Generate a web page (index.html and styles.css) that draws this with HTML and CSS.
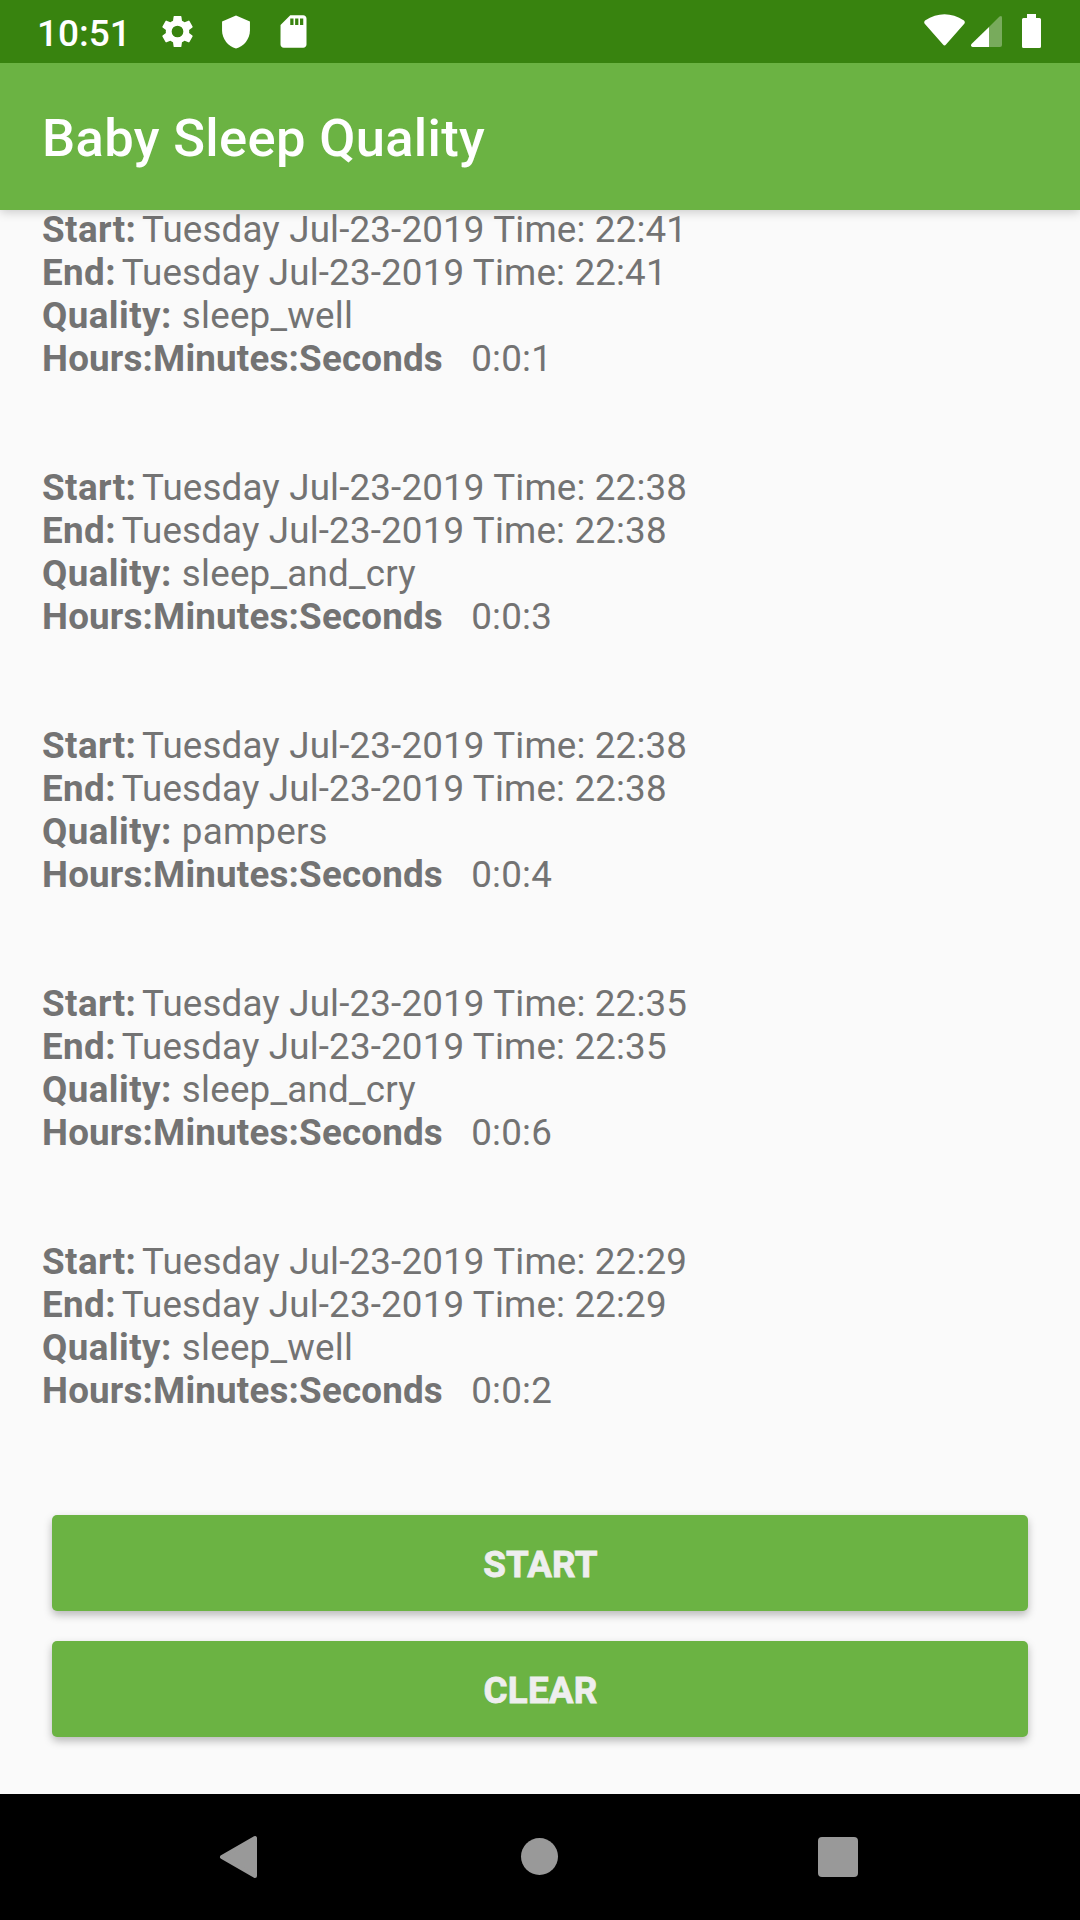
FILE: index.html
```html
<!DOCTYPE html>
<html lang="en"><head><meta charset="utf-8"><title>Baby Sleep Quality</title><link rel="stylesheet" href="styles.css"></head>
<body>
<header class="status">
<span class="clock">10:51</span>
<svg class="icon gear" viewBox="0 0 24 24"><path d="M19.14 12.94c.04-.3.06-.61.06-.94s-.02-.64-.07-.94l2.03-1.58a.49.49 0 0 0 .12-.61l-1.92-3.32a.49.49 0 0 0-.59-.22l-2.39.96a7 7 0 0 0-1.62-.94l-.36-2.54a.48.48 0 0 0-.48-.41h-3.84a.47.47 0 0 0-.47.41l-.36 2.54c-.59.24-1.13.57-1.62.94l-2.39-.96a.47.47 0 0 0-.59.22L2.74 8.87a.47.47 0 0 0 .12.61l2.03 1.58c-.05.3-.09.63-.09.94s.02.64.07.94l-2.03 1.58a.49.49 0 0 0-.12.61l1.92 3.32c.12.22.37.29.59.22l2.39-.96c.5.38 1.03.7 1.62.94l.36 2.54c.05.24.24.41.48.41h3.84c.24 0 .44-.17.47-.41l.36-2.54a7 7 0 0 0 1.62-.94l2.39.96c.22.08.47 0 .59-.22l1.92-3.32a.47.47 0 0 0-.12-.61zM12 15.6a3.6 3.6 0 1 1 0-7.2 3.6 3.6 0 0 1 0 7.2z"/></svg>
<svg class="icon shield" viewBox="0 0 24 24"><path d="M12 1 2.7 5v6c0 5.55 4.1 10.74 9.3 12 5.2-1.26 9.3-6.45 9.3-12V5z"/></svg>
<svg class="icon card" viewBox="0 0 24 24"><path d="M18 2h-8L4.02 8 4 20c0 1.1.9 2 2 2h12c1.1 0 2-.9 2-2V4c0-1.1-.9-2-2-2zm-6 6h-2V4h2zm3 0h-2V4h2zm3 0h-2V4h2z"/></svg>
<svg class="signals" viewBox="920 0 160 63"><path d="M925 20.500Q944.500 8 964 20.500Q965.500 22 964.500 23.500L946 44.500Q944.500 46.500 943 44.500L924.500 23.500Q923.500 22 925 20.500Z"/><path fill-opacity=".32" d="M989 27 999.500 16.500Q1002 15 1002 17.500V45Q1002 47 1000 47H989Z"/><path d="M989 27V47H972.500Q970 46 971.500 44Z"/><path d="M1027 14h9v4h3.500q1.500 0 1.500 1.500v27q0 1.500-1.500 1.500h-16q-1.500 0-1.500-1.500v-27q0-1.500 1.500-1.500h3.500z"/></svg>
</header>
<h1 class="toolbar">Baby Sleep Quality</h1>
<main class="content">
<section class="records">
<p><b>Start:</b> <span class="date">Tuesday Jul-23-2019 Time: 22:41</span><br><b>End:</b> <span class="date">Tuesday Jul-23-2019 Time: 22:41</span><br><b>Quality:</b> <span>sleep_well</span><br><b class="duration">Hours:Minutes:Seconds</b> &nbsp; <span>0:0:1</span></p>
<p><b>Start:</b> <span class="date">Tuesday Jul-23-2019 Time: 22:38</span><br><b>End:</b> <span class="date">Tuesday Jul-23-2019 Time: 22:38</span><br><b>Quality:</b> <span>sleep_and_cry</span><br><b class="duration">Hours:Minutes:Seconds</b> &nbsp; <span>0:0:3</span></p>
<p><b>Start:</b> <span class="date">Tuesday Jul-23-2019 Time: 22:38</span><br><b>End:</b> <span class="date">Tuesday Jul-23-2019 Time: 22:38</span><br><b>Quality:</b> <span>pampers</span><br><b class="duration">Hours:Minutes:Seconds</b> &nbsp; <span>0:0:4</span></p>
<p><b>Start:</b> <span class="date">Tuesday Jul-23-2019 Time: 22:35</span><br><b>End:</b> <span class="date">Tuesday Jul-23-2019 Time: 22:35</span><br><b>Quality:</b> <span>sleep_and_cry</span><br><b class="duration">Hours:Minutes:Seconds</b> &nbsp; <span>0:0:6</span></p>
<p><b>Start:</b> <span class="date">Tuesday Jul-23-2019 Time: 22:29</span><br><b>End:</b> <span class="date">Tuesday Jul-23-2019 Time: 22:29</span><br><b>Quality:</b> <span>sleep_well</span><br><b class="duration">Hours:Minutes:Seconds</b> &nbsp; <span>0:0:2</span></p>
</section>
<div class="actions"><button>START</button><button>CLEAR</button></div>
</main>
<nav class="navbar"><svg viewBox="0 0 1080 126"><path d="M222 63 255 44v38z" stroke-width="4" stroke-linejoin="round"/><circle cx="539.5" cy="62.5" r="18.5"/><rect x="818" y="43" width="40" height="40" rx="4"/></svg></nav>
</body></html>
```
FILE: styles.css
```css
* { box-sizing: border-box; }
body { margin: 0; width: 1080px; height: 1920px; display: flex; flex-direction: column; background: #fafafa; font-family: Roboto, sans-serif; overflow: hidden; }
.status { height: 63px; flex: none; background: #38830f; color: #fff; display: flex; align-items: center; padding-left: 37px; }
.clock { font-size: 37px; font-weight: 500; width: 121px; padding-top: 3px; }
.icon { width: 39px; height: 39px; fill: #fff; margin-right: 19px; }
.shield { width: 36px; height: 36px; margin-left: 1.5px; margin-right: 20.5px; }
.signals { width: 160px; height: 63px; fill: #fff; margin-left: auto; }
.toolbar { margin: 0; height: 147px; flex: none; background: #6bb343; color: #fff; font-size: 52.5px; font-weight: 500; letter-spacing: .34px; line-height: 151px; padding-left: 42px; box-shadow: 0 2px 10px #0003; clip-path: inset(0 0 -14px 0); }
.content { flex: 1; padding: 0 42px; }
.records { font-size: 36.75px; line-height: 43px; color: #737373; margin-top: -2px; }
.records p { margin: 0 0 86px; }
.records p:last-child { margin-bottom: 103px; }
.records b { font-weight: 700; letter-spacing: .42px; }
.records .duration { letter-spacing: .18px; }
.records span { margin-left: 1px; letter-spacing: .22px; }
.records .date { margin-left: -3.5px; letter-spacing: .16px; }
.actions { display: flex; flex-direction: column; gap: 30px; padding: 0 10px; }
.actions button { height: 96px; border: 0; border-radius: 5px; background: #6bb343; color: #eee; font: 700 36.75px Roboto, sans-serif; letter-spacing: .2px; padding: 2px 0 0 1px; -webkit-text-stroke: .8px #eee; box-shadow: 0 4px 8px #0004; }
.navbar { height: 126px; flex: none; background: #000; }
.navbar svg { display: block; width: 1080px; height: 126px; fill: #999; stroke: #999; stroke-width: 0; }
```
